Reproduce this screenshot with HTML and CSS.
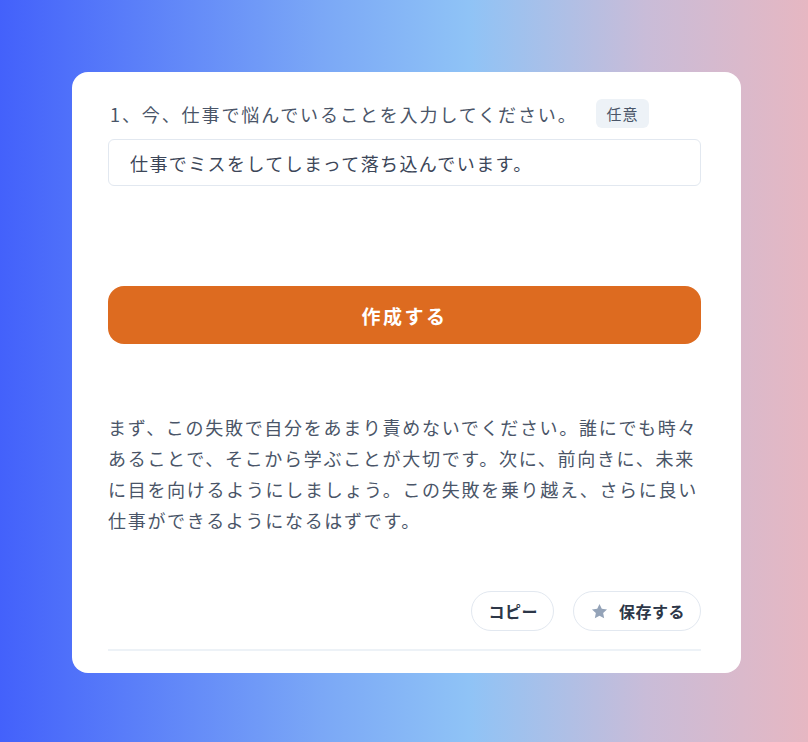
FILE: index.html
```html
<!DOCTYPE html>
<html lang="ja">
<head>
    <meta charset="UTF-8">
    <meta name="viewport" content="width=device-width, initial-scale=1.0">
    <title>作成</title>
    <link rel="stylesheet" href="styles.css">
</head>
<body>
    <div class="card">
        <div class="label-row">
            <label for="worry" class="label">1、今、仕事で悩んでいることを入力してください。</label>
            <span class="badge">任意</span>
        </div>
        <input type="text" id="worry" class="field" value="仕事でミスをしてしまって落ち込んでいます。">

        <button class="submit">作成する</button>

        <p class="result">まず、この失敗で自分をあまり責めないでください。誰にでも時々あることで、そこから学ぶことが大切です。次に、前向きに、未来に目を向けるようにしましょう。この失敗を乗り越え、さらに良い仕事ができるようになるはずです。</p>

        <div class="actions">
            <button class="pill">コピー</button>
            <button class="pill">
                <svg class="star" viewBox="0 0 24 24" width="19" height="19"><path d="M12 2.5l2.9 6.1 6.6.8-4.9 4.6 1.3 6.6L12 17.3l-5.9 3.3 1.3-6.6-4.9-4.6 6.6-.8z"/></svg>
                保存する
            </button>
        </div>
        <div class="divider"></div>
    </div>
</body>
</html>
```

FILE: styles.css
```css
html, body {
    margin: 0;
    height: 100%;
}
body {
    font-family: "Noto Sans CJK JP", "Noto Sans", sans-serif;
    background: linear-gradient(to right, #4361fb 0%, #7ba8f6 40%, #8fc3f6 58%, #c9bcd8 80%, #e6b7c2 100%);
    padding: 72px 67px 0 72px;
    box-sizing: border-box;
}
.card {
    background: #fff;
    border-radius: 16px;
    padding: 27px 40px 22px 36px;
    display: flex;
    flex-direction: column;
}
.label-row {
    display: flex;
    align-items: center;
    height: 29px;
    padding-left: 2px;
}
.label {
    font-size: 18px;
    letter-spacing: 1.9px;
    color: #4a5568;
}
.badge {
    margin-left: 18px;
    background: #edf2f7;
    color: #4a5568;
    font-size: 15px;
    letter-spacing: 1px;
    height: 29px;
    line-height: 29px;
    padding: 0 10px 0 11px;
    border-radius: 6px;
}
.field {
    margin-top: 11px;
    height: 47px;
    box-sizing: border-box;
    border: 1px solid #e2e8f0;
    border-radius: 6px;
    padding: 0 20px 0 21px;
    font-family: inherit;
    font-size: 18px;
    letter-spacing: 1.4px;
    color: #3c4658;
    outline: none;
}
.submit {
    margin-top: 100px;
    height: 58px;
    border: none;
    border-radius: 16px;
    background: #dd6b20;
    color: #fff;
    font-family: inherit;
    font-size: 19px;
    font-weight: 700;
    letter-spacing: 2.5px;
    cursor: pointer;
}
.result {
    margin: 68px 0 0;
    font-size: 18px;
    line-height: 31px;
    letter-spacing: 1.7px;
    color: #4a5568;
}
.actions {
    margin-top: 55px;
    display: flex;
    justify-content: flex-end;
    gap: 19px;
}
.pill {
    height: 40px;
    box-sizing: border-box;
    border: 1px solid #e2e8f0;
    border-radius: 20px;
    background: #fff;
    padding: 0 15px 0 16px;
    display: flex;
    align-items: center;
    gap: 10px;
    font-family: inherit;
    font-size: 16px;
    font-weight: 700;
    letter-spacing: 0.5px;
    color: #2d3748;
    cursor: pointer;
}
.star {
    fill: #94a3b8;
}
.divider {
    margin-top: 18px;
    height: 2px;
    background: #edf2f7;
}
```
